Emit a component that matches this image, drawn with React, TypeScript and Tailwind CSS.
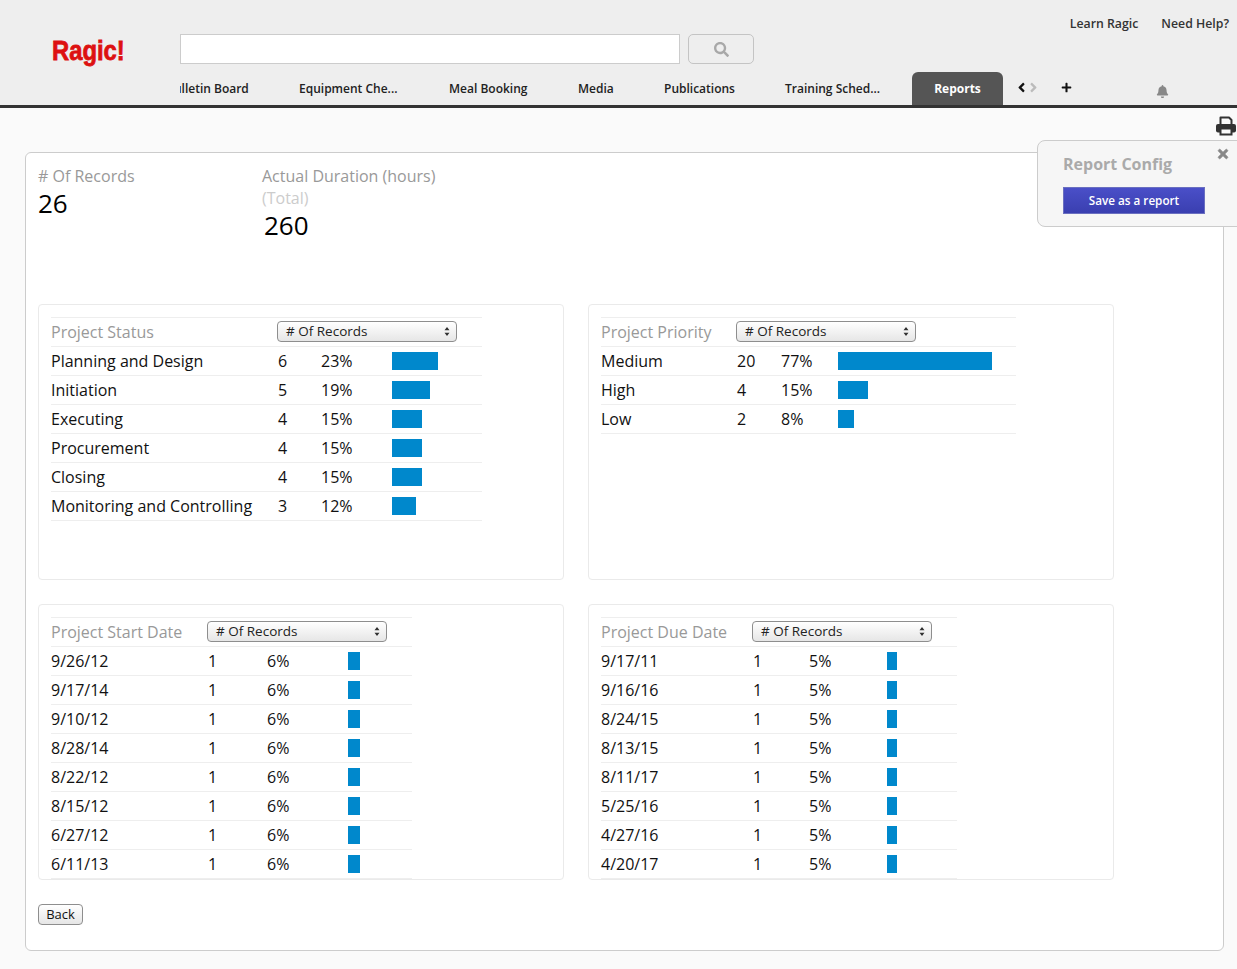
import { FaAngleLeft, FaAngleRight, FaBell, FaPlus, FaSearch, FaTimes } from 'react-icons/fa'

interface Row {
  label: string
  count: number
  pct: number
}

interface ReportTable {
  title: string
  cols: string
  rows: Row[]
}

const dates = (list: string[], pct: number) => list.map((label) => ({ label, count: 1, pct }))

const tables: ReportTable[] = [
  {
    title: 'Project Status',
    cols: 'w-[431px] grid-cols-[227px_43px_71px_90px]',
    rows: [
      { label: 'Planning and Design', count: 6, pct: 23 },
      { label: 'Initiation', count: 5, pct: 19 },
      { label: 'Executing', count: 4, pct: 15 },
      { label: 'Procurement', count: 4, pct: 15 },
      { label: 'Closing', count: 4, pct: 15 },
      { label: 'Monitoring and Controlling', count: 3, pct: 12 },
    ],
  },
  {
    title: 'Project Priority',
    cols: 'w-[415px] grid-cols-[136px_44px_57px_178px]',
    rows: [
      { label: 'Medium', count: 20, pct: 77 },
      { label: 'High', count: 4, pct: 15 },
      { label: 'Low', count: 2, pct: 8 },
    ],
  },
  {
    title: 'Project Start Date',
    cols: 'w-[361px] grid-cols-[157px_59px_81px_64px]',
    rows: dates(['9/26/12', '9/17/14', '9/10/12', '8/28/14', '8/22/12', '8/15/12', '6/27/12', '6/11/13'], 6),
  },
  {
    title: 'Project Due Date',
    cols: 'w-[356px] grid-cols-[152px_56px_78px_70px]',
    rows: dates(['9/17/11', '9/16/16', '8/24/15', '8/13/15', '8/11/17', '5/25/16', '4/27/16', '4/20/17'], 5),
  },
]

const tabs = [
  { name: 'Bulletin Board', width: 'w-[133px]' },
  { name: 'Equipment Che...', width: 'w-[150px]' },
  { name: 'Meal Booking', width: 'w-[129px]' },
  { name: 'Media', width: 'w-[86px]' },
  { name: 'Publications', width: 'w-[121px]' },
  { name: 'Training Sched...', width: 'w-[127px]' },
]

function SelectBox() {
  return (
    <div className="mb-[2px] flex h-[21px] w-[180px] items-center justify-between rounded-[4px] border border-[#8e8e8e] bg-gradient-to-b from-white to-[#e6e6e6] pl-2 pr-[6px] text-[13.5px] leading-none text-[#222]">
      <span className="pt-[2px]"># Of Records</span>
      <svg width="6" height="11" viewBox="0 0 6 11" className="fill-[#333]">
        <path d="M3 1 L5.5 4.3 H0.5 Z M3 10 L0.5 6.7 H5.5 Z" />
      </svg>
    </div>
  )
}

function PrintIcon() {
  return (
    <svg width="20" height="20" viewBox="0 0 20 20" className="text-[#333]">
      <path d="M4.5 9V1.5H13L15.5 4V9" fill="#fafafa" stroke="currentColor" strokeWidth="2" strokeLinejoin="round" />
      <rect x="0" y="8" width="20" height="8.5" rx="2" fill="currentColor" />
      <rect x="4.5" y="12.5" width="11" height="6" fill="#fafafa" stroke="currentColor" strokeWidth="2" />
    </svg>
  )
}

function Panel({ table }: { table: ReportTable }) {
  return (
    <div className="h-[276px] w-[526px] overflow-hidden rounded-[4px] border border-[#eaeaea] pl-3 pt-3">
      <div className={`${table.cols} border-t border-[#eeeeee]`}>
        <div className={`grid ${table.cols} h-[29px] items-center border-b border-[#eeeeee]`}>
          <div className="text-[16px] text-[#999999]">{table.title}</div>
          <div className="col-span-3 -ml-[1px]">
            <SelectBox />
          </div>
        </div>
        {table.rows.map((row) => (
          <div key={row.label} className={`grid ${table.cols} h-[29px] items-center border-b border-[#eeeeee] text-[16px] text-[#111]`}>
            <div className="whitespace-nowrap">{row.label}</div>
            <div>{row.count}</div>
            <div>{row.pct}%</div>
            <div className="h-[18px] bg-[#0088cc]" style={{ width: row.pct * 2 }} />
          </div>
        ))}
      </div>
    </div>
  )
}

export default function App() {
  return (
    <div className="relative h-[969px] w-[1237px] overflow-hidden bg-[#fafafa] font-['Open_Sans',sans-serif]">
      {/* Header */}
      <div className="h-[108px] border-b-[3px] border-[#333333] bg-[#eeeeee]">
        <div className="flex h-[34px] items-start justify-end gap-[23px] pr-2 pt-[15px] text-[12.3px] font-semibold text-[#333]">
          <span>Learn Ragic</span>
          <span>Need Help?</span>
        </div>
        <div className="flex h-[30px] items-center">
          <div className="w-[180px] pl-[52px] pt-[5px]">
            <span className="inline-block origin-left scale-x-[0.85] font-['Liberation_Sans',sans-serif] text-[28px] font-bold leading-none text-[#dd1111] [-webkit-text-stroke:0.8px_#dd1111]">
              Ragic!
            </span>
          </div>
          <div className="h-[30px] w-[500px] border border-[#cccccc] bg-white" />
          <div className="ml-2 flex h-[30px] w-[66px] items-center justify-center rounded-[5px] border border-[#c4c4c4] text-[#a8a8a8]">
            <FaSearch size={15} />
          </div>
        </div>
        <div className="mt-2 flex h-[33px] items-stretch pl-[180px]">
          <div className="flex w-[732px] overflow-hidden text-[12px] font-semibold text-[#222]">
            <div className="-ml-[14px] flex shrink-0">
              {tabs.map((tab) => (
                <div key={tab.name} className={`${tab.width} shrink-0 whitespace-nowrap pt-[8px]`}>
                  {tab.name}
                </div>
              ))}
            </div>
          </div>
          <div className="flex h-[33px] w-[91px] items-center justify-center rounded-t-[6px] bg-[#555555] text-[12px] font-bold text-white">
            Reports
          </div>
          <div className="ml-[11px] flex h-[33px] items-center pb-[2px]">
            <FaAngleLeft size={15} className="text-[#111]" />
            <FaAngleRight size={15} className="-ml-[3px] text-[#bbbbbb]" />
            <FaPlus size={11} className="ml-[20px] text-[#111]" />
            <FaBell size={13} className="ml-[84px] mt-[7px] text-[#888888]" />
          </div>
        </div>
      </div>

      {/* Body */}
      <div className="flex h-[44px] justify-end pr-[1px] pt-2">
        <PrintIcon />
      </div>
      <div className="mx-[25px] h-[799px] w-[1199px] rounded-[6px] border border-[#cccccc] bg-white px-3">
        <div className="flex h-[151px]">
          <div className="w-[224px] pt-[12px]">
            <div className="text-[16px] leading-[22px] text-[#999999]"># Of Records</div>
            <div className="text-[26px] leading-[32px] text-black">26</div>
          </div>
          <div className="pt-[12px]">
            <div className="text-[16px] leading-[22px] text-[#999999]">Actual Duration (hours)</div>
            <div className="text-[16px] leading-[22px] text-[#cccccc]">(Total)</div>
            <div className="ml-[2px] text-[26px] leading-[32px] text-black">260</div>
          </div>
        </div>
        <div className="grid w-[1076px] grid-cols-[526px_526px] gap-6">
          {tables.map((table) => (
            <Panel key={table.title} table={table} />
          ))}
        </div>
        <button className="mt-6 flex h-[21px] w-[45px] items-center justify-center rounded-[4px] border border-[#8e8e8e] bg-gradient-to-b from-white to-[#e6e6e6] text-[13px] text-[#111]">
          Back
        </button>
      </div>

      {/* Report Config popup */}
      <div className="absolute left-[1037px] top-[140px] h-[87px] w-[210px] rounded-[8px] border border-[#cccccc] bg-[#f6f6f6] pl-[25px] pt-[11px]">
        <FaTimes size={14} className="absolute left-[178px] top-[6px] stroke-current text-[#888888] [stroke-width:24]" />
        <div className="text-[16px] font-bold leading-[24px] text-[#aaaaaa]">Report Config</div>
        <div className="mt-[11px] flex h-[27px] w-[142px] items-center justify-center border border-[#6a6fc0] bg-gradient-to-b from-[#4a4fc8] to-[#3a3fb0] text-[11.7px] font-semibold text-white">
          Save as a report
        </div>
      </div>
    </div>
  )
}
